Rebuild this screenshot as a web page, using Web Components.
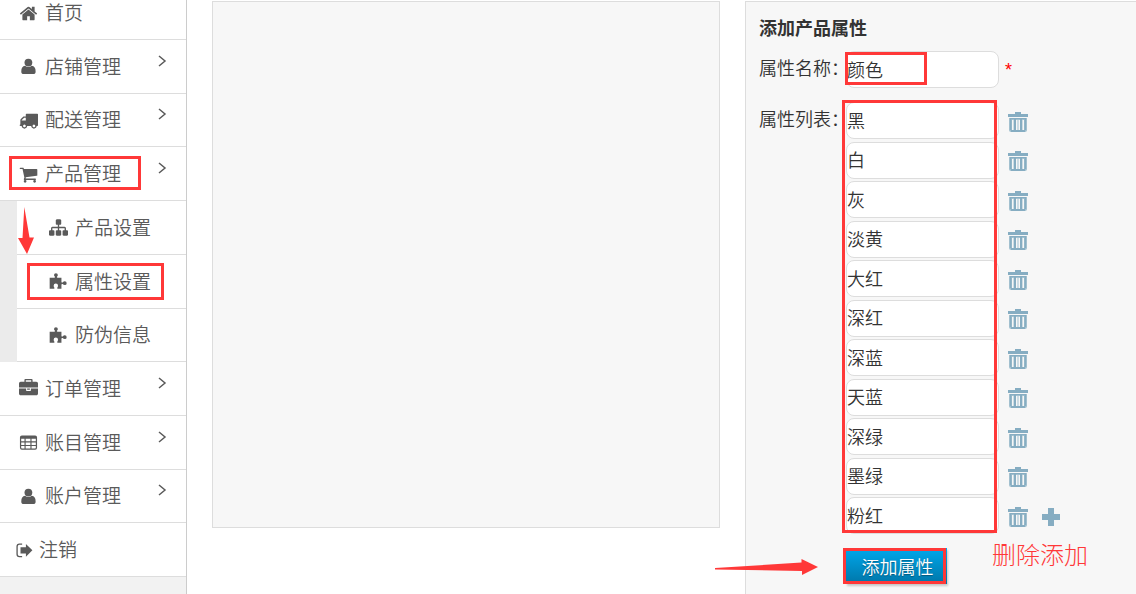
<!DOCTYPE html>
<html lang="zh-CN">
<head>
<meta charset="utf-8">
<title>产品属性设置</title>
<style>
  html { overflow: hidden; }
  body {
    margin: 0;
    font-family: "Noto Sans CJK SC", "Liberation Sans", sans-serif;
    font-weight: 350;
    color: #333;
    background: #fff;
    --line: #ddd;
    --panel: #f7f7f7;
    --mark: #ff3838;
    --icon: #86adc2;
  }
</style>
</head>
<body>
<shop-admin></shop-admin>

<script>
const ICONS = {
  home: ['0 0 1792 1792', '<path d="M1472 992v480q0 26-19 45t-45 19h-384v-384h-256v384h-384q-26 0-45-19t-19-45v-480q0-1 .5-3t.5-3l575-474 575 474q1 2 1 6zm223-69l-62 74q-8 9-21 11h-3q-13 0-21-7l-692-577-692 577q-12 8-24 7-13-2-21-11l-62-74q-8-10-7-23.5t11-21.5l719-599q32-26 76-26t76 26l244 204v-195q0-14 9-23t23-9h192q14 0 23 9t9 23v408l219 182q10 8 11 21.5t-7 23.5z"/>'],
  user: ['0 0 20 20', '<path d="M17.500 15.200q0 2.800-2.600 2.800H5Q2.400 18 2.400 15.200q0-5.400 4-5.900 1.600 1.300 3.500 1.300t3.500-1.300q4.100.5 4.100 5.900z"/><circle cx="9.900" cy="5.900" r="4.100"/>'],
  truck: ['0 0 1792 1792', '<path d="M640 1408q0-52-38-90t-90-38-90 38-38 90 38 90 90 38 90-38 38-90zm-384-512h384v-256h-158q-13 0-22 9l-195 195q-9 9-9 22v30zm1280 512q0-52-38-90t-90-38-90 38-38 90 38 90 90 38 90-38 38-90zm256-1088v1024q0 15-4 26.5t-13.5 18.5-16.5 11.5-23.5 6-22.5 2-25.5 0-22.5-.5q0 106-75 181t-181 75-181-75-75-181h-384q0 106-75 181t-181 75-181-75-75-181h-64q-3 0-22.500.5t-25.500 0-22.500-2-23.500-6-16.500-11.500-13.500-18.500-4-26.500q0-26 19-45t45-19v-320q0-8-.5-35t0-38 2.500-34.500 6.500-37 14-30.500 22.500-30l198-198q19-19 50.500-32t58.500-13h160v-192q0-26 19-45t45-19h1024q26 0 45 19t19 45z"/>'],
  cart: ['0 0 1792 1792', '<path d="M704 1536q0 52-38 90t-90 38-90-38-38-90 38-90 90-38 90 38 38 90zm896 0q0 52-38 90t-90 38-90-38-38-90 38-90 90-38 90 38 38 90zm128-1088v512q0 24-16.5 42.5t-40.5 21.5l-1044 122q13 60 13 70 0 16-24 64h920q26 0 45 19t19 45-19 45-45 19h-1024q-26 0-45-19t-19-45q0-11 8-31.5t16-36 21.5-40 15.5-29.5l-177-823h-204q-26 0-45-19t-19-45 19-45 45-19h256q16 0 28.5 6.5t19.5 15.5 13 24.5 8 26 5.5 29.5 4.5 26h1201q26 0 45 19t19 45z"/>'],
  sitemap: ['0 0 1792 1792', '<path d="M1792 1248v320q0 40-28 68t-68 28h-320q-40 0-68-28t-28-68v-320q0-40 28-68t68-28h96v-192h-512v192h96q40 0 68 28t28 68v320q0 40-28 68t-68 28h-320q-40 0-68-28t-28-68v-320q0-40 28-68t68-28h96v-192h-512v192h96q40 0 68 28t28 68v320q0 40-28 68t-68 28h-320q-40 0-68-28t-28-68v-320q0-40 28-68t68-28h96v-192q0-52 38-90t90-38h512v-192h-96q-40 0-68-28t-28-68v-320q0-40 28-68t68-28h320q40 0 68 28t28 68v320q0 40-28 68t-68 28h-96v192h512q52 0 90 38t38 90v192h96q40 0 68 28t28 68z"/>'],
  briefcase: ['0 0 1792 1792', '<path d="M640 256h512v-128h-512v128zm1152 640v480q0 66-47 113t-113 47h-1472q-66 0-113-47t-47-113v-480h672v160q0 26 19 45t45 19h320q26 0 45-19t19-45v-160h672zm-768 0v128h-256v-128h256zm768-480v384h-1792v-384q0-66 47-113t113-47h352v-160q0-40 28-68t68-28h576q40 0 68 28t28 68v160h352q66 0 113 47t47 113z"/>'],
  puzzle: ['0 0 20 20', '<path d="M.7 6h4.800q1 0 .8-.9-1-.8-1-1.900a2 2 0 0 1 4 0q0 1.100-1 1.900-.2.900.8.900h4v4.200q0 1.200 1.300.8.900-1.200 2.200-1.200a2 2 0 0 1 0 4q-1.300 0-2.200-1.200-1.300-.4-1.300.8V17.500H9.300q-1 0-.6-1 .8-.9.8-2a2.300 2.300 0 0 0-4.600 0q0 1.100.8 2 .4 1-.6 1H.7z"/>'],
  table: ['0 0 20 20', '<path fill-rule="evenodd" d="M3 2.500h14q2 0 2 2v11q0 2-2 2H3q-2 0-2-2v-11q0-2 2-2zM2.300 6v2.800h3.500V6zm4.700 0v2.800h5V6zm6.200 0v2.800h4.500V6zM2.300 10v2.600h3.500V10zM7 10v2.600h5V10zm6.200 0v2.600h4.500V10zM2.300 13.800v1.700q0 .8.800.8h2.700v-2.500zm4.700 0v2.500h5v-2.500zm6.200 0v2.500h3.700q.8 0 .8-.8v-1.700z"/>'],
  signout: ['0 0 20 20', '<path d="M7.500 3.200H4.700Q2.200 3.200 2.200 5.700v8.200q0 2.500 2.500 2.500h2.800" fill="none" stroke="currentColor" stroke-width="1.400"/><path d="M5.800 6.500h5.700V3.100l6.800 6.700-6.800 6.700v-3.400H5.800z"/>'],
  chevron: ['0 0 20 20', '<path d="M7 5l6 5-6 5" fill="none" stroke="currentColor" stroke-width="1.500"/>'],
  trash: ['0 0 20 20', '<path d="M7 0h6v2h7v3H0V2h7z"/><path d="M1 6h18v12q0 2-2 2H3q-2 0-2-2z" opacity=".75"/><path d="M2 6h16v1H2zM2 7h1.500v11H2zM6 7h2v11H6zM12 7h2v11h-2zM16.500 7H18v11h-1.500zM3 18h14v2H3z"/><path d="M4 8h1.500v10H4zM8 8h1.500v10H8zM10.500 8H12v10h-1.500zM14.500 8H16v10h-1.500z" fill="#f7f7f7"/>'],
  plus: ['0 0 20 20', '<path d="M7 1h6v6h6v6h-6v6H7v-6H1V7h6z"/>']
};

/* Small vector icon chosen by its name attribute. */
class UiIcon extends HTMLElement {
  connectedCallback() {
    if (this.shadowRoot) return;
    const [box, body] = ICONS[this.getAttribute('name')];
    this.attachShadow({ mode: 'open' }).innerHTML = `
      <style>
        :host { display: block; flex: none; width: 20px; height: 20px; }
        svg { display: block; width: 100%; height: 100%; fill: currentColor; }
      </style>
      <svg viewBox="${box}" aria-hidden="true">${body}</svg>`;
  }
}
customElements.define('ui-icon', UiIcon);

/* One row of the side menu. */
class NavItem extends HTMLElement {
  connectedCallback() {
    if (this.shadowRoot) return;
    this.attachShadow({ mode: 'open' }).innerHTML = `
      <style>
        :host { display: flex; align-items: flex-end; box-sizing: border-box; min-height: 0;
                background: #fff; border-bottom: 1px solid var(--line); }
        a { flex: 1; display: flex; align-items: center; gap: 6px; height: 52px; 
            padding: 0 14px 0 19px; font-size: 19px; line-height: 26px; color: #5a5a5a; text-decoration: none; }
        :host([sub]) a { padding-left: 32px; }
        :host([sub]) { margin-left: 17px; }
        :host([exit]) a { padding-left: 15px; gap: 5px; }
        a > ui-icon:first-child { width: 19px; height: 19px; margin-right: 1px; }
        :host([exit]) ui-icon { margin: 0; }
        span { margin-bottom: 2px; }
        .more { margin-left: auto; margin-bottom: 12px; }
      </style>
      <a href="#"><ui-icon name="${this.getAttribute('icon')}"></ui-icon><span><slot></slot></span>${this.hasAttribute('more') ? '<ui-icon class="more" name="chevron"></ui-icon>' : ''}</a>`;
  }
}
customElements.define('nav-item', NavItem);

/* Side menu column. */
class SideMenu extends HTMLElement {
  connectedCallback() {
    if (this.shadowRoot) return;
    this.attachShadow({ mode: 'open' }).innerHTML = `
      <style>
        :host { display: block; background: #f2f2f2; border-right: 1px solid #ccc; }
        nav { display: grid; grid-template-rows: 40px; grid-auto-rows: 1fr; height: 577px; background: #ebebeb; }
      </style>
      <nav><slot></slot></nav>`;
  }
}
customElements.define('side-menu', SideMenu);

/* Grey bordered surface. */
class UiPanel extends HTMLElement {
  connectedCallback() {
    if (this.shadowRoot) return;
    this.attachShadow({ mode: 'open' }).innerHTML = `
      <style>
        :host { display: block; box-sizing: border-box; background: var(--panel); border: 1px solid var(--line); }
      </style>
      <slot></slot>`;
  }
}
customElements.define('ui-panel', UiPanel);

/* Form for a product attribute: its name and its list of values. */
class AttributeForm extends HTMLElement {
  connectedCallback() {
    if (this.shadowRoot) return;
    const values = this.getAttribute('values').split(',');
    const rows = values.map((v, i) => `
      <li><input type="text" value="${v}" aria-label="属性 ${i + 1}"${i ? '' : ' id="first"'}>
        <button class="tool" type="button" aria-label="删除"><ui-icon name="trash"></ui-icon></button>
        ${i === values.length - 1 ? '<button class="tool" type="button" aria-label="添加"><ui-icon name="plus"></ui-icon></button>' : ''}
      </li>`).join('');
    this.attachShadow({ mode: 'open' }).innerHTML = `
      <style>
        :host { display: block; padding: 12px 13px 0; font-size: 18px; line-height: 26px; }
        h2 { margin: 0 0 11px; font-size: 18px; line-height: 26px; font-weight: 700; }
        form { display: grid; grid-template-columns: 87px 1fr; row-gap: 14px; }
        label { white-space: nowrap; padding-top: 3px; }
        input { box-sizing: border-box; width: 153px; height: 37px; margin: 0; padding: 0 0 2px; border: 1px solid var(--line);
                border-radius: 8px; background: #fff; font: inherit; color: inherit; }
        .name { display: flex; align-items: center; gap: 6px; }
        .need { color: #f00; font-family: "Liberation Sans", sans-serif; }
        ul { display: flex; flex-direction: column; justify-content: space-between; height: 432px; margin: 0; padding: 0; list-style: none; }
        li { display: flex; align-items: center; }
        .tool { margin: 2px 0 0 9px; padding: 0; border: 0; background: none; color: var(--icon); }
        .tool + .tool { margin-left: 13px; }
        .submit { grid-column: 2; justify-self: start; height: 36px; width: 101px; padding: 0 0 0 2px; border: 0; font: inherit; color: #fff;
                  background: linear-gradient(#00a8ec, #0076a8); box-shadow: 1px 2px 2px #0003; text-shadow: 0 1px 1px #0005; }
      </style>
      <h2>添加产品属性</h2>
      <form>
        <label for="name">属性名称：</label>
        <div class="name"><input id="name" type="text" value="${this.getAttribute('name')}"><span class="need">*</span></div>
        <label for="first">属性列表：</label>
        <ul>${rows}</ul>
        <button class="submit" type="button">添加属性</button>
      </form>`;
  }
}
customElements.define('attribute-form', AttributeForm);

/* Red outlines, arrows and a note laid over the page as a guide. */
class GuideMarks extends HTMLElement {
  connectedCallback() {
    if (this.shadowRoot) return;
    const boxes = [[9, 156, 132, 34], [27, 263, 137, 37], [845, 52, 82, 33], [842, 100, 155, 433], [843, 548, 103, 36]];
    this.attachShadow({ mode: 'open' }).innerHTML = `
      <style>
        :host { position: absolute; inset: 0; pointer-events: none; color: var(--mark); }
        svg { position: absolute; left: 0; top: 0; width: 100%; height: 100%; fill: currentColor; }
        i { position: absolute; box-sizing: border-box; border: 3px solid; }
        p { position: absolute; left: 992px; top: 537px; margin: 0; font-size: 24px; line-height: 34px; font-weight: 300; white-space: nowrap; }
      </style>
      ${boxes.map(([x, y, w, h]) => `<i style="left:${x}px;top:${y}px;width:${w}px;height:${h}px"></i>`).join('')}
      <svg aria-hidden="true">
        <path d="M24.300 207L29.500 237.500H34L27 254 18 238h4.500z"/>
        <path d="M715 568L801.500 562.500V559L818 567 802 575V571L715 569.500z"/>
      </svg>
      <p>删除添加</p>`;
  }
}
customElements.define('guide-marks', GuideMarks);

/* Page frame. */
class ShopAdmin extends HTMLElement {
  connectedCallback() {
    if (this.shadowRoot) return;
    this.attachShadow({ mode: 'open' }).innerHTML = `
      <style>
        :host { display: grid; grid-template-columns: 187px 1fr; position: relative; min-height: 100vh; }
        main { display: grid; grid-template-columns: minmax(0, 508fr) minmax(0, 391fr); column-gap: 25px; padding: 1px 0 0 25px; }
        .view { height: 527px; }
        .edit { border-right: 0; border-bottom: 0; }
      </style>
      <side-menu>
        <nav-item icon="home">首页</nav-item>
        <nav-item icon="user" more>店铺管理</nav-item>
        <nav-item icon="truck" more>配送管理</nav-item>
        <nav-item icon="cart" more>产品管理</nav-item>
        <nav-item icon="sitemap" sub>产品设置</nav-item>
        <nav-item icon="puzzle" sub>属性设置</nav-item>
        <nav-item icon="puzzle" sub>防伪信息</nav-item>
        <nav-item icon="briefcase" more>订单管理</nav-item>
        <nav-item icon="table" more>账目管理</nav-item>
        <nav-item icon="user" more>账户管理</nav-item>
        <nav-item icon="signout" exit>注销</nav-item>
      </side-menu>
      <main>
        <ui-panel class="view"></ui-panel>
        <ui-panel class="edit"><attribute-form name="颜色" values="黑,白,灰,淡黄,大红,深红,深蓝,天蓝,深绿,墨绿,粉红"></attribute-form></ui-panel>
      </main>
      <guide-marks></guide-marks>`;
  }
}
customElements.define('shop-admin', ShopAdmin);
</script>
</body>
</html>
